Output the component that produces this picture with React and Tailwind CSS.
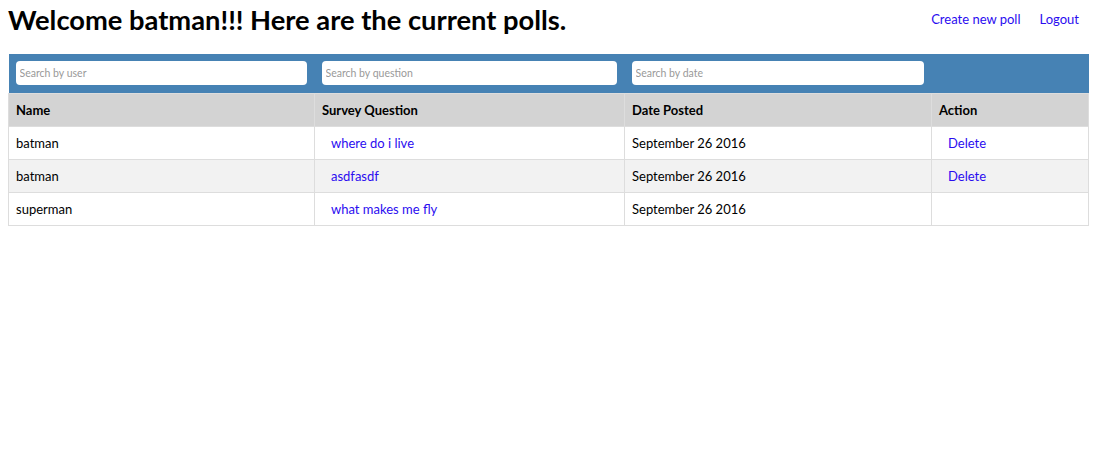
import React from "react";

const polls = [
  { name: "batman", question: "where do i live", date: "September 26 2016", own: true },
  { name: "batman", question: "asdfasdf", date: "September 26 2016", own: true },
  { name: "superman", question: "what makes me fly", date: "September 26 2016", own: false },
];

export default function App() {
  return (
    <div className="min-h-screen bg-white px-2 font-['Lato',sans-serif] text-black">
      <div className="flex items-start justify-between">
        <h1 className="mt-[4px] text-[27.3px] font-bold leading-[32px]">
          Welcome batman!!! Here are the current polls.
        </h1>
        <div className="mt-[10px] mr-[12px] flex gap-[19px] text-[13px] text-[#2a0cf0]">
          <a href="#">Create new poll</a>
          <a href="#">Logout</a>
        </div>
      </div>

      <table className="mt-[18px] w-[1081px] table-fixed border-collapse text-[13px]">
        <colgroup>
          <col className="w-[306px]" />
          <col className="w-[310px]" />
          <col className="w-[307px]" />
          <col />
        </colgroup>
        <thead>
          <tr className="h-[39px] bg-[#4682b4]">
            {["Search by user", "Search by question", "Search by date"].map((p) => (
              <td key={p} className="pl-[7px] pr-[8px]">
                <input
                  placeholder={p}
                  className="h-[24px] w-full rounded-[4px] bg-white px-[4px] text-[10.5px] outline-none placeholder:text-[#999]"
                />
              </td>
            ))}
            <td />
          </tr>
          <tr className="h-[33px] bg-[#d3d3d3] text-left">
            {["Name", "Survey Question", "Date Posted", "Action"].map((h) => (
              <th key={h} className="border border-[#dddddd] px-[7px] pt-[2px] font-bold">
                {h}
              </th>
            ))}
          </tr>
        </thead>
        <tbody>
          {polls.map((p, i) => (
            <tr key={i} className={`h-[33px] ${i % 2 === 1 ? "bg-[#f2f2f2]" : "bg-white"}`}>
              <td className="border border-[#dddddd] px-[7px] pt-[2px]">{p.name}</td>
              <td className="border border-[#dddddd] px-[7px] pt-[2px]">
                <a href="#" className="pl-[9px] text-[#2a0cf0]">{p.question}</a>
              </td>
              <td className="border border-[#dddddd] px-[7px] pt-[2px]">{p.date}</td>
              <td className="border border-[#dddddd] px-[7px] pt-[2px]">
                {p.own && (
                  <a href="#" className="pl-[9px] text-[#2a0cf0]">Delete</a>
                )}
              </td>
            </tr>
          ))}
        </tbody>
      </table>
    </div>
  );
}
